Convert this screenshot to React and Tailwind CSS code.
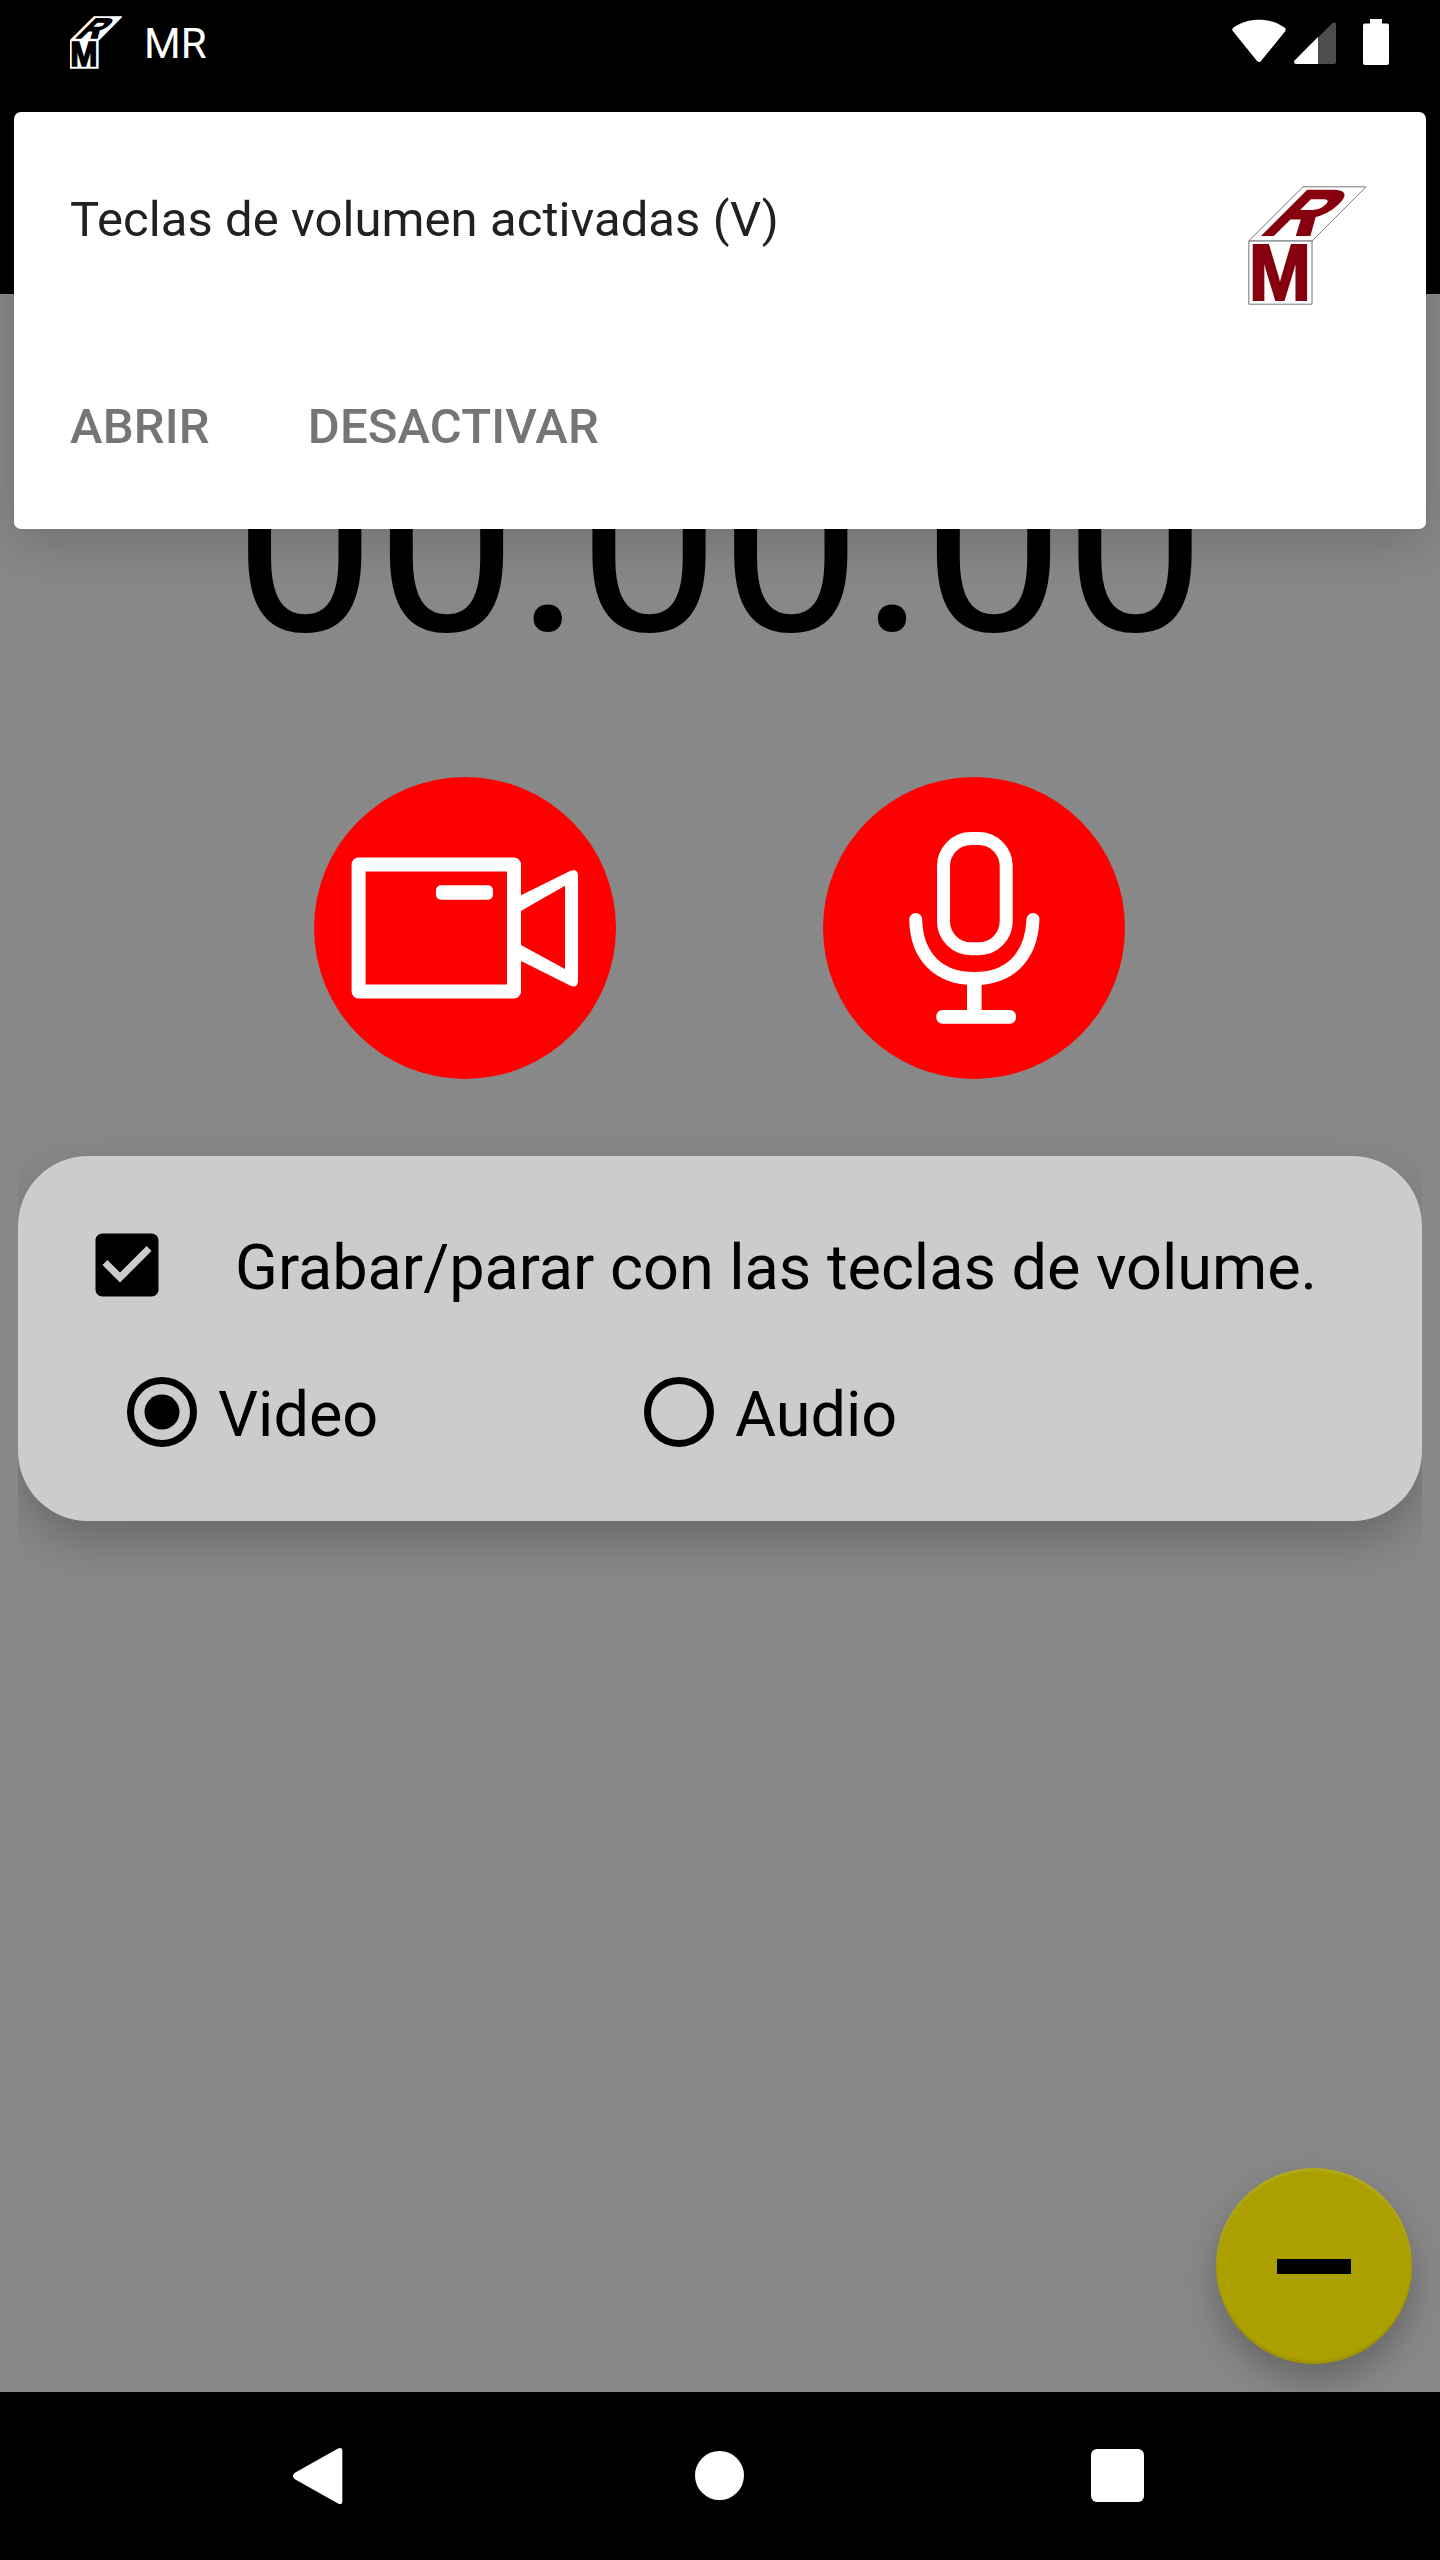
import React from "react";

function Logo({ className, face, letter, edge, edgeWidth, weight }) {
  return (
    <svg className={className} viewBox="0 0 119 119" aria-hidden="true">
      <g fill={face} stroke={edge} strokeWidth={edgeWidth} strokeLinejoin="miter">
        <path d="M.8 55 55 .8h63L64 55Z" />
        <path d="M.8 55H64v63.2H.8Z" />
      </g>
      <g fill={letter} stroke={letter} strokeWidth={weight} fontFamily="Liberation Sans, Arial, sans-serif" fontWeight="700">
        <text x="-5.4" y="0" fontSize="80" transform="translate(5.8 114.2) scale(.935 1)">M</text>
        <text x="-4.3" y="0" fontSize="64" transform="translate(15.4 48.8) skewX(-45) scale(1.13 1)">R</text>
      </g>
    </svg>
  );
}

function StatusBar() {
  return (
    <div className="flex h-[84px] items-start pl-[70px] pr-[51px] text-white">
      <Logo className="mt-4 h-[53px] w-[52px]" face="#fff" letter="#000" edge="#fff" edgeWidth="3" weight="3.5" />
      <span className="ml-[22px] mt-[19px] text-[42px] leading-[50px]">MR</span>
      <div className="ml-auto flex">
        <svg className="mt-[19px] h-[44px] w-[54px]" viewBox="0 0 54 44" fill="#fff">
          <path d="M1.2 12.5C-.3 11.300.2 9.500 1.500 8.500 16-2 38-2 52.500 8.500c1.300 1 1.800 2.800.5 4L29 42q-2 2-4 0Z" />
        </svg>
        <svg className="ml-[8px] mt-[22px] h-[42px] w-[42px]" viewBox="0 0 42 42">
          <path d="M24 15.500 38.300 1.200Q42-1 42 3V40q0 2-2 2H24Z" fill="#4d4d4d" />
          <path d="M24 15v27H2.500Q-1.500 41.500.8 38.200Z" fill="#fff" />
        </svg>
        <svg className="ml-[27px] mt-[19px] h-[46px] w-[26px]" viewBox="0 0 26 46" fill="#fff">
          <path d="M7 0h12v4.500h5q2 0 2 2V44q0 2-2 2H2q-2 0-2-2V6.500q0-2 2-2h5Z" />
        </svg>
      </div>
    </div>
  );
}

function Notification() {
  return (
    <section className="absolute left-[14px] top-[112px] flex h-[417px] w-[1412px] flex-col rounded-[7px] bg-white pl-14 shadow-[0_14px_50px_rgba(0,0,0,0.17)]">
      <div className="flex h-[230px] items-start justify-between pr-[59px] pt-[74px]">
        <p className="mt-[5px] text-[49px] leading-[58px] tracking-[0.07px] text-[#212121]">Teclas de volumen activadas (V)</p>
        <Logo className="h-[119px] w-[119px]" face="#fff" letter="#86000f" edge="#777" edgeWidth="1" weight="2.2" />
      </div>
      <div className="flex gap-[98px] pt-[56px] text-[49px] font-medium leading-[58px] tracking-[0.15px] text-[#757575]">
        <button>ABRIR</button>
        <button>DESACTIVAR</button>
      </div>
    </section>
  );
}

function VideoButton() {
  return (
    <button className="size-[302px] rounded-full bg-[#ff0000]" aria-label="Video">
      <svg viewBox="0 0 302 302" className="size-full">
        <rect x="44.600" y="87.500" width="155.400" height="127" fill="none" stroke="#fff" strokeWidth="14" strokeLinejoin="round" />
        <rect x="122" y="108.300" width="57" height="14.500" rx="5" fill="#fff" />
        <path fillRule="evenodd" fill="#fff" d="M206 118.800 256.500 93.700Q263.500 91.500 264 98V204Q263.500 211.500 256.500 208.800L206 183.500V167.500L251 192V108.700L206 134.600Z" />
      </svg>
    </button>
  );
}

function AudioButton() {
  return (
    <button className="size-[302px] rounded-full bg-[#ff0000]" aria-label="Audio">
      <svg viewBox="0 0 302 302" className="size-full" fill="none" stroke="#fff" strokeWidth="13">
        <rect x="120.500" y="61.500" width="62.700" height="110.300" rx="27.500" />
        <path strokeLinecap="round" d="M92.700 142.500C93.500 180 116 201.500 151.300 201.500S208.500 180 210 142.500" />
        <path strokeWidth="14.600" d="M151.300 202V236" />
        <rect x="113.300" y="233" width="79.700" height="13.700" rx="6" fill="#fff" stroke="none" />
      </svg>
    </button>
  );
}

function Radio({ label, checked }) {
  return (
    <label className="flex h-[84px] w-[517px] items-start">
      <svg viewBox="0 0 24 24" className="size-[84px]">
        <circle cx="12" cy="12" r="9" fill="none" stroke="#000" strokeWidth="2" />
        {checked && <circle cx="12" cy="12" r="5" />}
      </svg>
      <span className="ml-[14px] mt-[8px] text-[63px] leading-[74px]">{label}</span>
    </label>
  );
}

function VolumeKeysCard() {
  return (
    <div className="mx-[18px] [clip-path:inset(-100px_0)]">
      <div className="h-[365px] rounded-[70px] bg-[#cccccc] shadow-[0_20px_45px_rgba(0,0,0,0.22)]">
        <label className="flex h-[151px] items-start pl-[67px] pt-[67px]">
          <svg viewBox="0 0 24 24" className="size-[84px] shrink-0">
            <path d="M19 3H5c-1.110 0-2 .9-2 2v14c0 1.100.89 2 2 2h14c1.110 0 2-.9 2-2V5c0-1.100-.89-2-2-2zm-9 14l-5-5 1.410-1.410L10 14.170l7.590-7.590L19 8l-9 9z" />
          </svg>
          <span className="ml-[66px] mt-[8px] whitespace-nowrap text-[63px] leading-[74px] tracking-[-0.02px]">
            Grabar/parar con las teclas de volume.
          </span>
        </label>
        <div className="flex pl-[102px] pt-[63px]">
          <Radio label="Video" checked />
          <Radio label="Audio" />
        </div>
      </div>
    </div>
  );
}

function NavBar() {
  return (
    <nav className="flex h-[168px] items-start bg-black pl-[293px]">
      <svg className="mt-[55px] h-[58px] w-[50px]" viewBox="0 0 50 58" fill="#fff">
        <path d="M1.500 26 45 1.500Q49.300-.5 49.300 4V54Q49.300 58.500 45 56.500L1.500 32Q-1.500 29 1.500 26Z" />
      </svg>
      <div className="ml-[352px] mt-[59px] size-[49px] rounded-full bg-white" />
      <div className="ml-[347px] mt-[57px] size-[53px] rounded-[6px] bg-white" />
    </nav>
  );
}

export default function App() {
  return (
    <div className="relative flex h-[2560px] w-[1440px] flex-col overflow-hidden bg-[#888888] font-['Roboto',sans-serif] text-black">
      <header className="h-[294px] shrink-0 bg-black">
        <StatusBar />
      </header>
      <main className="flex flex-1 flex-col">
        <div className="mt-[125px] text-center text-[252px] leading-none">00:00:00</div>
        <div className="ml-[314px] mt-[106px] flex gap-[207px]">
          <VideoButton />
          <AudioButton />
        </div>
        <div className="mt-[77px]">
          <VolumeKeysCard />
        </div>
        <button
          className="mb-7 mr-7 mt-auto flex size-[196px] items-center justify-center self-end rounded-full bg-[#aba000] shadow-[0_16px_34px_rgba(0,0,0,0.25),inset_0_3px_2px_rgba(255,255,255,0.1),inset_0_-3px_2px_rgba(0,0,0,0.08)]"
          aria-label="Menos"
        >
          <span className="h-[15px] w-[74px] bg-black" />
        </button>
      </main>
      <NavBar />
      <Notification />
    </div>
  );
}
